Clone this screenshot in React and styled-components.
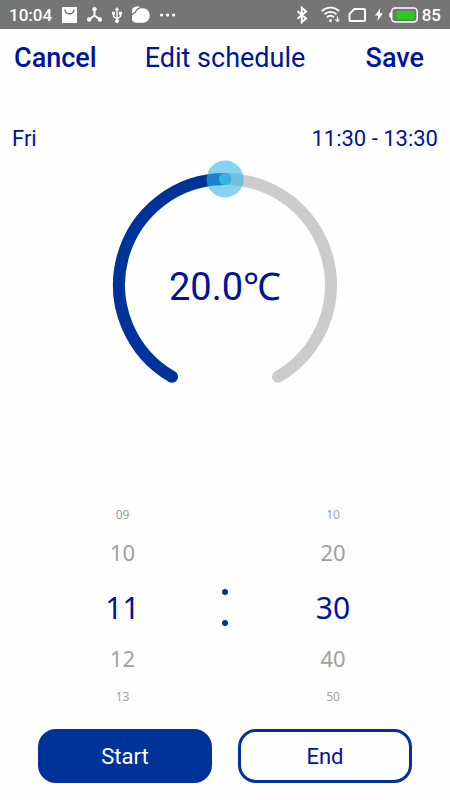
import React, { useState } from "react";
import styled, { createGlobalStyle } from "styled-components";

const MIN_TEMP = 5;
const MAX_TEMP = 35;
const SWEEP = 300;
const CENTER = 125;
const RADIUS = 106;

const hours = Array.from({ length: 24 }, (_, i) => String(i).padStart(2, "0"));
const minutes = ["00", "10", "20", "30", "40", "50"];

// angle is measured clockwise from the top of the dial
const pointAt = (angle) => {
    const rad = (angle * Math.PI) / 180;
    return [CENTER + RADIUS * Math.sin(rad), CENTER - RADIUS * Math.cos(rad)];
};

const arc = (from, to) => {
    const [x1, y1] = pointAt(from);
    const [x2, y2] = pointAt(to);
    const large = to - from > 180 ? 1 : 0;
    return `M${x1} ${y1} A${RADIUS} ${RADIUS} 0 ${large} 1 ${x2} ${y2}`;
};

const StatusIcons = () => (
    <Icons>
        <svg width="15" height="16" viewBox="0 0 15 16">
            <path d="M0 0h15v16H0z" fill="#fff" />
            <path d="M3 2.5c.5 5.8 8.5 5.8 9 0" fill="none" stroke="#757575" strokeWidth="1.5" />
        </svg>
        <svg width="15" height="15" viewBox="0 0 15 15" fill="#fff">
            <path d="M7.5 2v7M7.5 8.5L2 12.5M7.5 8.5l5.5 4" stroke="#fff" strokeWidth="1.9" />
            <circle cx="7.5" cy="2.2" r="2.2" />
            <circle cx="2.2" cy="12.5" r="2.2" />
            <circle cx="12.8" cy="12.5" r="2.2" />
        </svg>
        <svg width="10" height="16" viewBox="0 0 10 16" fill="#fff">
            <path d="M5 2v12M1.5 6v3.5L5 12M8.5 6v3.5L5 12" fill="none" stroke="#fff" strokeWidth="1.4" />
            <path d="M5 0l2.2 3.2H2.8zM0 4.8h3v3H0zM7 4.8h3v3H7z" />
            <circle cx="5" cy="14" r="2" />
        </svg>
        <svg width="18" height="17" viewBox="1 0 18 17" fill="#fff">
            <circle cx="6" cy="5.5" r="5.3" />
            <path
                d="M4.7 7.2C5.6 4 8.2 2.3 11.5 2.3c4.2 0 7.2 3.1 7.2 7.2 0 4.2-3 7.2-6.7 7.2H5.2C2.5 16.7.5 14.6.5 12c0-2.5 1.7-4.4 4.2-4.8z"
                stroke="#757575"
                strokeWidth="2.4"
                paintOrder="stroke"
            />
        </svg>
        <svg width="16" height="4" viewBox="1 0 16 4" fill="#fff">
            <circle cx="2.6" cy="2" r="1.6" />
            <circle cx="8.6" cy="2" r="1.6" />
            <circle cx="14.6" cy="2" r="1.6" />
        </svg>
    </Icons>
);

const SystemIcons = () => (
    <Icons $tight>
        <svg width="20" height="18" viewBox="0 0 20 18">
            <path d="M2.5 5.3l8.5 7.2-4.2 3.7V1.8L11 5.5l-8.5 7.2" fill="none" stroke="#fff" strokeWidth="2" />
        </svg>
        <svg width="21" height="17" viewBox="0 0 21 17" fill="none" stroke="#fff">
            <path d="M.8 5.2C5.5.3 13.5.3 18.2 5.2M3.5 8.4c3.3-3.5 8.7-3.5 12 0M6 11.3c2-2.1 5-2.1 7 0" strokeWidth="1.8" />
            <circle cx="9.5" cy="14.4" r="1.5" fill="#fff" stroke="none" />
            <path d="M16.5 10.500v5M14.5 13.500l2 2 2-2" strokeWidth="1.2" />
        </svg>
        <svg width="21" height="16" viewBox="0 0 21 16">
            <path d="M6.3 2H16q1 0 1 1v10q0 1-1 1H2.5q-1 0-1-1V6.8z" fill="none" stroke="#fff" strokeWidth="2" />
        </svg>
        <svg width="8" height="13" viewBox="0 0 8 13">
            <path d="M5.5 0L0 7.5h3.2L2.500 13 8 5.2H4.7z" fill="#fff" />
        </svg>
        <svg width="29" height="16" viewBox="0 0 29 16">
            <rect x="2.7" y="1" width="25.5" height="14" rx="3.5" fill="none" stroke="#fff" strokeWidth="1.5" />
            <path d="M2.5 5Q.2 5 .2 8t2.3 3z" fill="#fff" />
            <rect x="7.5" y="4" width="18" height="8.5" fill="#22cf12" />
        </svg>
    </Icons>
);

const Dial = ({ value, onChange }) => {
    const angle = -SWEEP / 2 + ((value - MIN_TEMP) / (MAX_TEMP - MIN_TEMP)) * SWEEP;
    const [x, y] = pointAt(angle);

    return (
        <DialBox>
            <svg viewBox="0 0 250 250" width="250" height="250" fill="none" strokeWidth="12" strokeLinecap="round">
                <path d={arc(-SWEEP / 2, SWEEP / 2)} stroke="#cccccc" />
                <path d={arc(-SWEEP / 2, angle)} stroke="#003399" />
                <circle cx={x} cy={y} r="18.5" fill="#33b5e5" fillOpacity="0.6" />
                <circle cx={x} cy={y} r="6" fill="#33b5e5" />
            </svg>
            <DialInput
                type="range"
                aria-label="Temperature"
                min={MIN_TEMP}
                max={MAX_TEMP}
                step="0.5"
                value={value}
                onChange={(e) => onChange(Number(e.target.value))}
            />
            <Temperature>{value.toFixed(1)}℃</Temperature>
        </DialBox>
    );
};

const Wheel = ({ label, options, value, onChange }) => {
    const current = options.indexOf(value);

    return (
        <WheelColumn role="group" aria-label={label}>
            {[-2, -1, 0, 1, 2].map((offset) => {
                const option = options[(current + offset + options.length) % options.length];
                return (
                    <WheelItem
                        key={offset}
                        type="button"
                        $distance={Math.abs(offset)}
                        aria-pressed={offset === 0}
                        onClick={() => onChange(option)}
                    >
                        {option}
                    </WheelItem>
                );
            })}
        </WheelColumn>
    );
};

const App = () => {
    const [temperature, setTemperature] = useState(20);
    const [editing, setEditing] = useState("start");
    const [times, setTimes] = useState({ start: "11:30", end: "13:30" });

    const [hour, minute] = times[editing].split(":");
    const setTime = (h, m) => setTimes((prev) => ({ ...prev, [editing]: `${h}:${m}` }));

    return (
        <Screen>
            <GlobalStyle />
            <StatusBar>
                <span>10:04</span>
                <StatusIcons />
                <Spacer />
                <SystemIcons />
                <Battery>85</Battery>
            </StatusBar>

            <Header>
                <HeaderButton type="button">Cancel</HeaderButton>
                <Title>Edit schedule</Title>
                <HeaderButton type="button" $end>Save</HeaderButton>
            </Header>

            <Period>
                <span>Fri</span>
                <span>{times.start} - {times.end}</span>
            </Period>

            <DialArea>
                <Dial value={temperature} onChange={setTemperature} />
            </DialArea>

            <TimePicker>
                <Wheel label="Hour" options={hours} value={hour} onChange={(h) => setTime(h, minute)} />
                <Colon>
                    <Dot />
                    <Dot />
                </Colon>
                <Wheel label="Minute" options={minutes} value={minute} onChange={(m) => setTime(hour, m)} />
            </TimePicker>

            <Actions>
                <ActionButton type="button" $active={editing === "start"} onClick={() => setEditing("start")}>
                    Start
                </ActionButton>
                <ActionButton type="button" $active={editing === "end"} onClick={() => setEditing("end")}>
                    End
                </ActionButton>
            </Actions>
        </Screen>
    );
};

export default App;

// Styled components
const GlobalStyle = createGlobalStyle`
    * {
        box-sizing: border-box;
    }

    body {
        margin: 0;
        background-color: #fefefe;
        font-family: Roboto, "Liberation Sans", sans-serif;
    }
`;

const Screen = styled.div`
    display: flex;
    flex-direction: column;
    min-height: 100vh;
    color: #00149a;
`;

const StatusBar = styled.div`
    display: flex;
    align-items: center;
    gap: 10px;
    height: 29px;
    padding: 0 9px;
    background-color: #757575;
    color: #ffffff;
    font-size: 17px;
    font-weight: 500;
`;

const Icons = styled.div`
    display: flex;
    align-items: center;
    gap: ${(props) => (props.$tight ? "6px" : "10px")};
`;

const Spacer = styled.div`
    flex: 1;
`;

const Battery = styled.span`
    margin-left: -6px;
`;

const Header = styled.header`
    display: grid;
    grid-template-columns: 1fr auto 1fr;
    align-items: center;
    height: 57px;
    padding: 0 14px;
`;

const Button = styled.button`
    padding: 0;
    border: none;
    background: none;
    font-family: inherit;
    cursor: pointer;
`;

const HeaderButton = styled(Button)`
    justify-self: ${(props) => (props.$end ? "end" : "start")};
    padding-right: 12px;
    color: inherit;
    font-size: 27px;
    font-weight: 500;
`;

const Title = styled.h1`
    margin: 0;
    font-size: 27px;
    font-weight: 400;
`;

const Period = styled.div`
    display: flex;
    justify-content: space-between;
    margin-top: 36px;
    padding: 0 12px;
    font-size: 22px;
    line-height: 34px;
`;

const DialArea = styled.main`
    display: flex;
    flex: 1;
    justify-content: center;
    align-items: flex-start;
    padding-top: 4px;
`;

const DialBox = styled.div`
    display: grid;
    place-items: center;

    > * {
        grid-area: 1 / 1;
    }
`;

const DialInput = styled.input`
    width: 100%;
    height: 100%;
    margin: 0;
    opacity: 0;
    cursor: pointer;
`;

const Temperature = styled.div`
    font-size: 38px;
    pointer-events: none;
`;

const TimePicker = styled.section`
    display: grid;
    grid-template-columns: 15fr 40px 16fr;
    padding: 0 29px 0 40px;
`;

const WheelColumn = styled.div`
    display: flex;
    flex-direction: column;
`;

const wheelSteps = [
    { height: 62, size: 30, color: "#00149a" },
    { height: 44, size: 22, color: "#a0a0a0" },
    { height: 32, size: 12, color: "#a0a0a0" },
];

const WheelItem = styled(Button)`
    height: ${(props) => wheelSteps[props.$distance].height}px;
    padding-top: ${(props) => (props.$distance === 0 ? "4px" : "0")};
    color: ${(props) => wheelSteps[props.$distance].color};
    font-family: "Noto Sans", "Open Sans", sans-serif;
    font-size: ${(props) => wheelSteps[props.$distance].size}px;
`;

const Colon = styled.div`
    display: flex;
    flex-direction: column;
    justify-content: center;
    align-items: center;
    gap: 25px;
    padding-top: 4px;
`;

const Dot = styled.span`
    width: 6px;
    height: 6px;
    border-radius: 50%;
    background-color: #003399;
`;

const Actions = styled.footer`
    display: flex;
    gap: 26px;
    padding: 17px 38px;
`;

const ActionButton = styled(Button)`
    flex: 1;
    height: 54px;
    border: 3px solid #003399;
    border-radius: 18px;
    background-color: ${(props) => (props.$active ? "#003399" : "#fefefe")};
    color: ${(props) => (props.$active ? "#ffffff" : "#00149a")};
    font-size: 22px;
`;
